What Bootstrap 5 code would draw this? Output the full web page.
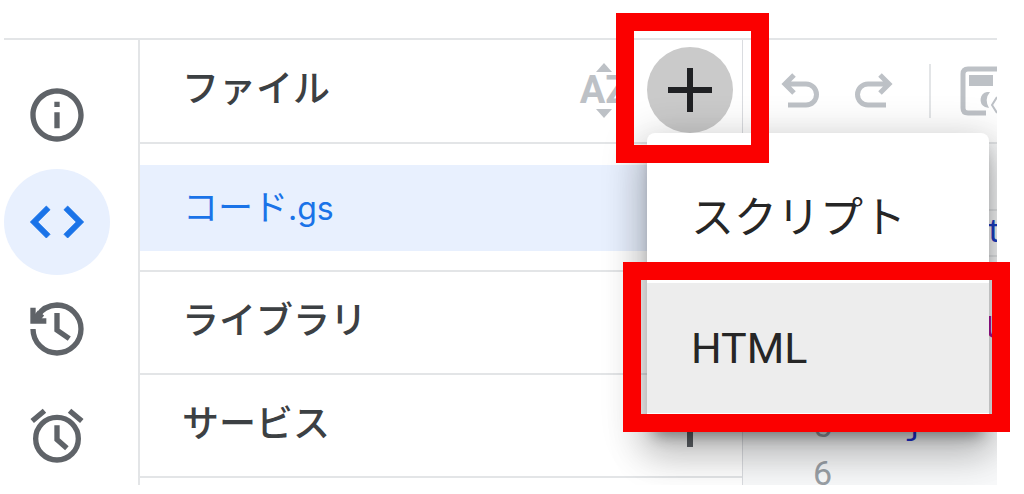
<!DOCTYPE html>
<html lang="ja">
<head>
<meta charset="utf-8">
<meta name="viewport" content="width=device-width, initial-scale=1">
<title>Apps Script エディタ</title>
<link href="https://cdn.jsdelivr.net/npm/bootstrap@5.3.0/dist/css/bootstrap.min.css" rel="stylesheet">
<style>
  :root { --line: #e3e5e7; --ink: #3c4043; --muted: #bdc1c6; }
  body { font-family: Roboto, "Noto Sans CJK JP", sans-serif; color: var(--ink); background: #fff; }
  .sheet { padding: 38px 27px 9px 4px; }
  .app { height: calc(100vh - 47px); border-top: 2px solid var(--line); }
  .rail { width: 136px; padding-top: 22px; gap: 1px; border-right: 2px solid var(--line); }
  .rail a { width: 106px; height: 106px; color: #5f6368; }
  .rail a.active { background: #e8f0fe; color: #1a73e8; }
  .files { width: 603px; border-right: 1px solid #dadce0; }
  .pane-row { height: 103px; padding: 0 9px 2px 42px; border-bottom: 2px solid var(--line); }
  .pane-row h2 { font-size: 37px; line-height: 48px; font-weight: 500; }
  .pane-row.files-head { height: 104px; }
  .file-list { padding: 21px 0 19px; border-bottom: 2px solid var(--line); }
  .file-list a { height: 86px; padding: 0 43px; font-family: Inter, "Noto Sans CJK JP", sans-serif; font-size: 35px; line-height: 48px; background: #e8f0fe; color: #1a73e8; }
  .file-list .ext { font-size: 32px; }
  .sort { width: 54px; color: var(--muted); font-size: 38px; line-height: 37px; font-weight: 700; margin-right: 16px; }
  .round { width: 86px; height: 86px; color: #202124; }
  .round.pressed { background: #cacaca; }
  .add-menu { top: 100%; left: 0; width: 342px; padding: 20px 0 18px; border: 0; border-radius: 8px; display: block;
    box-shadow: 0 11px 15px -7px rgba(0,0,0,.4), 0 24px 38px 3px rgba(0,0,0,.16), 0 9px 40px 8px rgba(0,0,0,.16); }
  .add-menu .dropdown-item { height: 130px; padding: 0 44px; font-size: 43px; line-height: 60px; color: #262626; }
  .add-menu .dropdown-item.hovered { background: #ededed; }
  .toolbar { height: 104px; padding-left: 33px; border-bottom: 2px solid var(--line); color: var(--muted); }
  .tool { width: 48px; height: 54px; }
  .tool-gap { margin-left: 26px; }
  .rule { width: 2px; height: 54px; background: var(--line); margin: 0 28px 0 31px; }
  .code { background: #f8f9fa; padding-top: 65px; font-family: "Liberation Mono", monospace; font-size: 34px; line-height: 48px; }
  .code li { height: 48px; }
  .code li.current { box-shadow: inset 0 2px #e4e6e8, inset 0 -2px #e4e6e8; }
  .num { width: 161px; padding-left: 70px; font-family: Roboto, sans-serif; color: #9aa0a6; }
  .kw { color: #1c3fc4; } .cls { color: #a8129b; } .brace { color: #1f2fd6; }
  .frame { border: 18px solid #fb0000; z-index: 1100; pointer-events: none; }
  .frame-add { left: 616px; top: 13px; width: 153px; height: 150px; }
  .frame-html { left: 623px; top: 262px; width: 387px; height: 170px; }
</style>
</head>
<body>
<div class="sheet position-relative">
  <div class="app d-flex overflow-hidden">
    <nav class="rail d-flex flex-column flex-shrink-0" aria-label="メイン">
      <a href="#" class="rounded-circle d-flex flex-shrink-0 align-items-center justify-content-center" aria-label="概要">
        <svg width="64" height="64" viewBox="0 0 24 24" fill="currentColor"><path d="M11 7h2v2h-2zm0 4h2v6h-2zm1-9C6.480 2 2 6.480 2 12s4.480 10 10 10 10-4.480 10-10S17.520 2 12 2zm0 18c-4.410 0-8-3.590-8-8s3.590-8 8-8 8 3.590 8 8-3.590 8-8 8z"/></svg>
      </a>
      <a href="#" class="active rounded-circle d-flex flex-shrink-0 align-items-center justify-content-center" aria-label="エディタ">
        <svg width="64" height="64" viewBox="0 0 24 24" fill="currentColor" stroke="currentColor" stroke-width=".3"><path d="M9.400 16.600 4.800 12l4.600-4.600L8 6l-6 6 6 6zm5.200 0 4.600-4.600-4.600-4.600L16 6l6 6-6 6z"/></svg>
      </a>
      <a href="#" class="rounded-circle d-flex flex-shrink-0 align-items-center justify-content-center" aria-label="履歴">
        <svg width="64" height="64" viewBox="0 0 24 24" fill="none" stroke="currentColor" stroke-width="2"><path d="M3 12a9 9 0 1 0 9-9 9 9 0 0 0-7.400 4.200"/><path d="M2 4h2v2.500L5.500 8H8v2H2z" fill="currentColor" stroke="none"/><path d="M4 8.500 6 6" stroke-width="3"/><path d="M12 6v6.400l4.600 3.200"/></svg>
      </a>
      <a href="#" class="rounded-circle d-flex flex-shrink-0 align-items-center justify-content-center" aria-label="トリガー">
        <svg width="64" height="64" viewBox="0 0 24 24" fill="none" stroke="currentColor" stroke-width="2"><circle cx="12" cy="13" r="8"/><path d="M12 8v5.300l3.700 3.300M2.700 6.400l4.600-3.900M21.300 6.400l-4.600-3.900"/></svg>
      </a>
    </nav>

    <section class="files flex-shrink-0 position-relative z-3">
      <div class="pane-row files-head d-flex align-items-center">
        <h2 class="m-0 me-auto">ファイル</h2>
        <button type="button" class="sort btn p-0 border-0 d-flex flex-column align-items-center" aria-label="並べ替え">
          <svg width="16" height="9" viewBox="0 0 16 9" fill="currentColor"><path d="M0 9 8 0l8 9z"/></svg>
          <span>AZ</span>
          <svg width="16" height="9" viewBox="0 0 16 9" fill="currentColor"><path d="M0 0h16L8 9z"/></svg>
        </button>
        <div class="dropdown">
          <button type="button" class="round pressed btn p-0 border-0 rounded-circle d-flex align-items-center justify-content-center" aria-label="ファイルを追加" aria-expanded="true">
            <svg width="44" height="44" viewBox="0 0 44 44" stroke="currentColor" stroke-width="6"><path d="M0 22h44M22 0v44"/></svg>
          </button>
          <div class="add-menu dropdown-menu show">
            <button type="button" class="dropdown-item">スクリプト</button>
            <button type="button" class="dropdown-item hovered">HTML</button>
          </div>
        </div>
      </div>
      <div class="file-list">
        <a href="#" class="d-flex align-items-center text-decoration-none"><span>コード<span class="ext">.gs</span></span></a>
      </div>
      <div class="pane-row d-flex align-items-center">
        <h2 class="m-0 me-auto">ライブラリ</h2>
      </div>
      <div class="pane-row d-flex align-items-center">
        <h2 class="m-0 me-auto">サービス</h2>
        <button type="button" class="round btn p-0 border-0 rounded-circle d-flex align-items-center justify-content-center" aria-label="サービスを追加">
          <svg width="44" height="44" viewBox="0 0 44 44" stroke="#5f6368" stroke-width="6"><path d="M0 22h44M22 0v44"/></svg>
        </button>
      </div>
    </section>

    <main class="flex-grow-1 overflow-hidden d-flex flex-column">
      <div class="toolbar d-flex align-items-center flex-shrink-0">
        <button type="button" class="tool btn p-0 border-0 flex-shrink-0" aria-label="元に戻す">
          <svg class="d-block mx-auto" width="38" height="36" viewBox="0 0 38 36" fill="none" stroke="#bdc1c6" stroke-width="5"><path d="M13 2 4 11l9 9M4 11h21a10 10 0 0 1 0 21H7"/></svg>
        </button>
        <button type="button" class="tool tool-gap btn p-0 border-0 flex-shrink-0" aria-label="やり直す">
          <svg class="d-block mx-auto" width="38" height="36" viewBox="0 0 38 36" fill="none" stroke="#bdc1c6" stroke-width="5"><path d="m25 2 9 9-9 9M34 11H13a10 10 0 0 0 0 21h18"/></svg>
        </button>
        <span class="rule flex-shrink-0"></span>
        <button type="button" class="tool btn p-0 border-0 flex-shrink-0" aria-label="プロジェクトを保存">
          <svg class="d-block" width="48" height="50" viewBox="0 0 48 50"><path d="M48 3H9Q4 3 4 8v34q0 5 5 5h18" fill="none" stroke="#bdc1c6" stroke-width="5"/><path d="M10 9h24v11H10zM28 26a8 8 0 0 0-2 15l4 1q-5-9 1-16z" fill="#bdc1c6"/><path d="m38 31-5 8 5 8" fill="none" stroke="#bdc1c6" stroke-width="2"/></svg>
        </button>
      </div>
      <ol class="code list-unstyled m-0 flex-grow-1">
        <li class="current d-flex"><span class="num flex-shrink-0"></span><span class="kw">funct</span></li>
        <li></li>
        <li class="d-flex"><span class="num flex-shrink-0"></span><span class="cls">&nbsp;&nbsp;&nbsp;&nbsp;U</span></li>
        <li></li>
        <li class="d-flex"><span class="num flex-shrink-0">5</span><span class="brace">}</span></li>
        <li class="d-flex"><span class="num flex-shrink-0">6</span></li>
      </ol>
    </main>
  </div>
  <div class="frame frame-add position-absolute"></div>
  <div class="frame frame-html position-absolute"></div>
</div>
<script src="https://cdn.jsdelivr.net/npm/bootstrap@5.3.0/dist/js/bootstrap.bundle.min.js"></script>
</body>
</html>
